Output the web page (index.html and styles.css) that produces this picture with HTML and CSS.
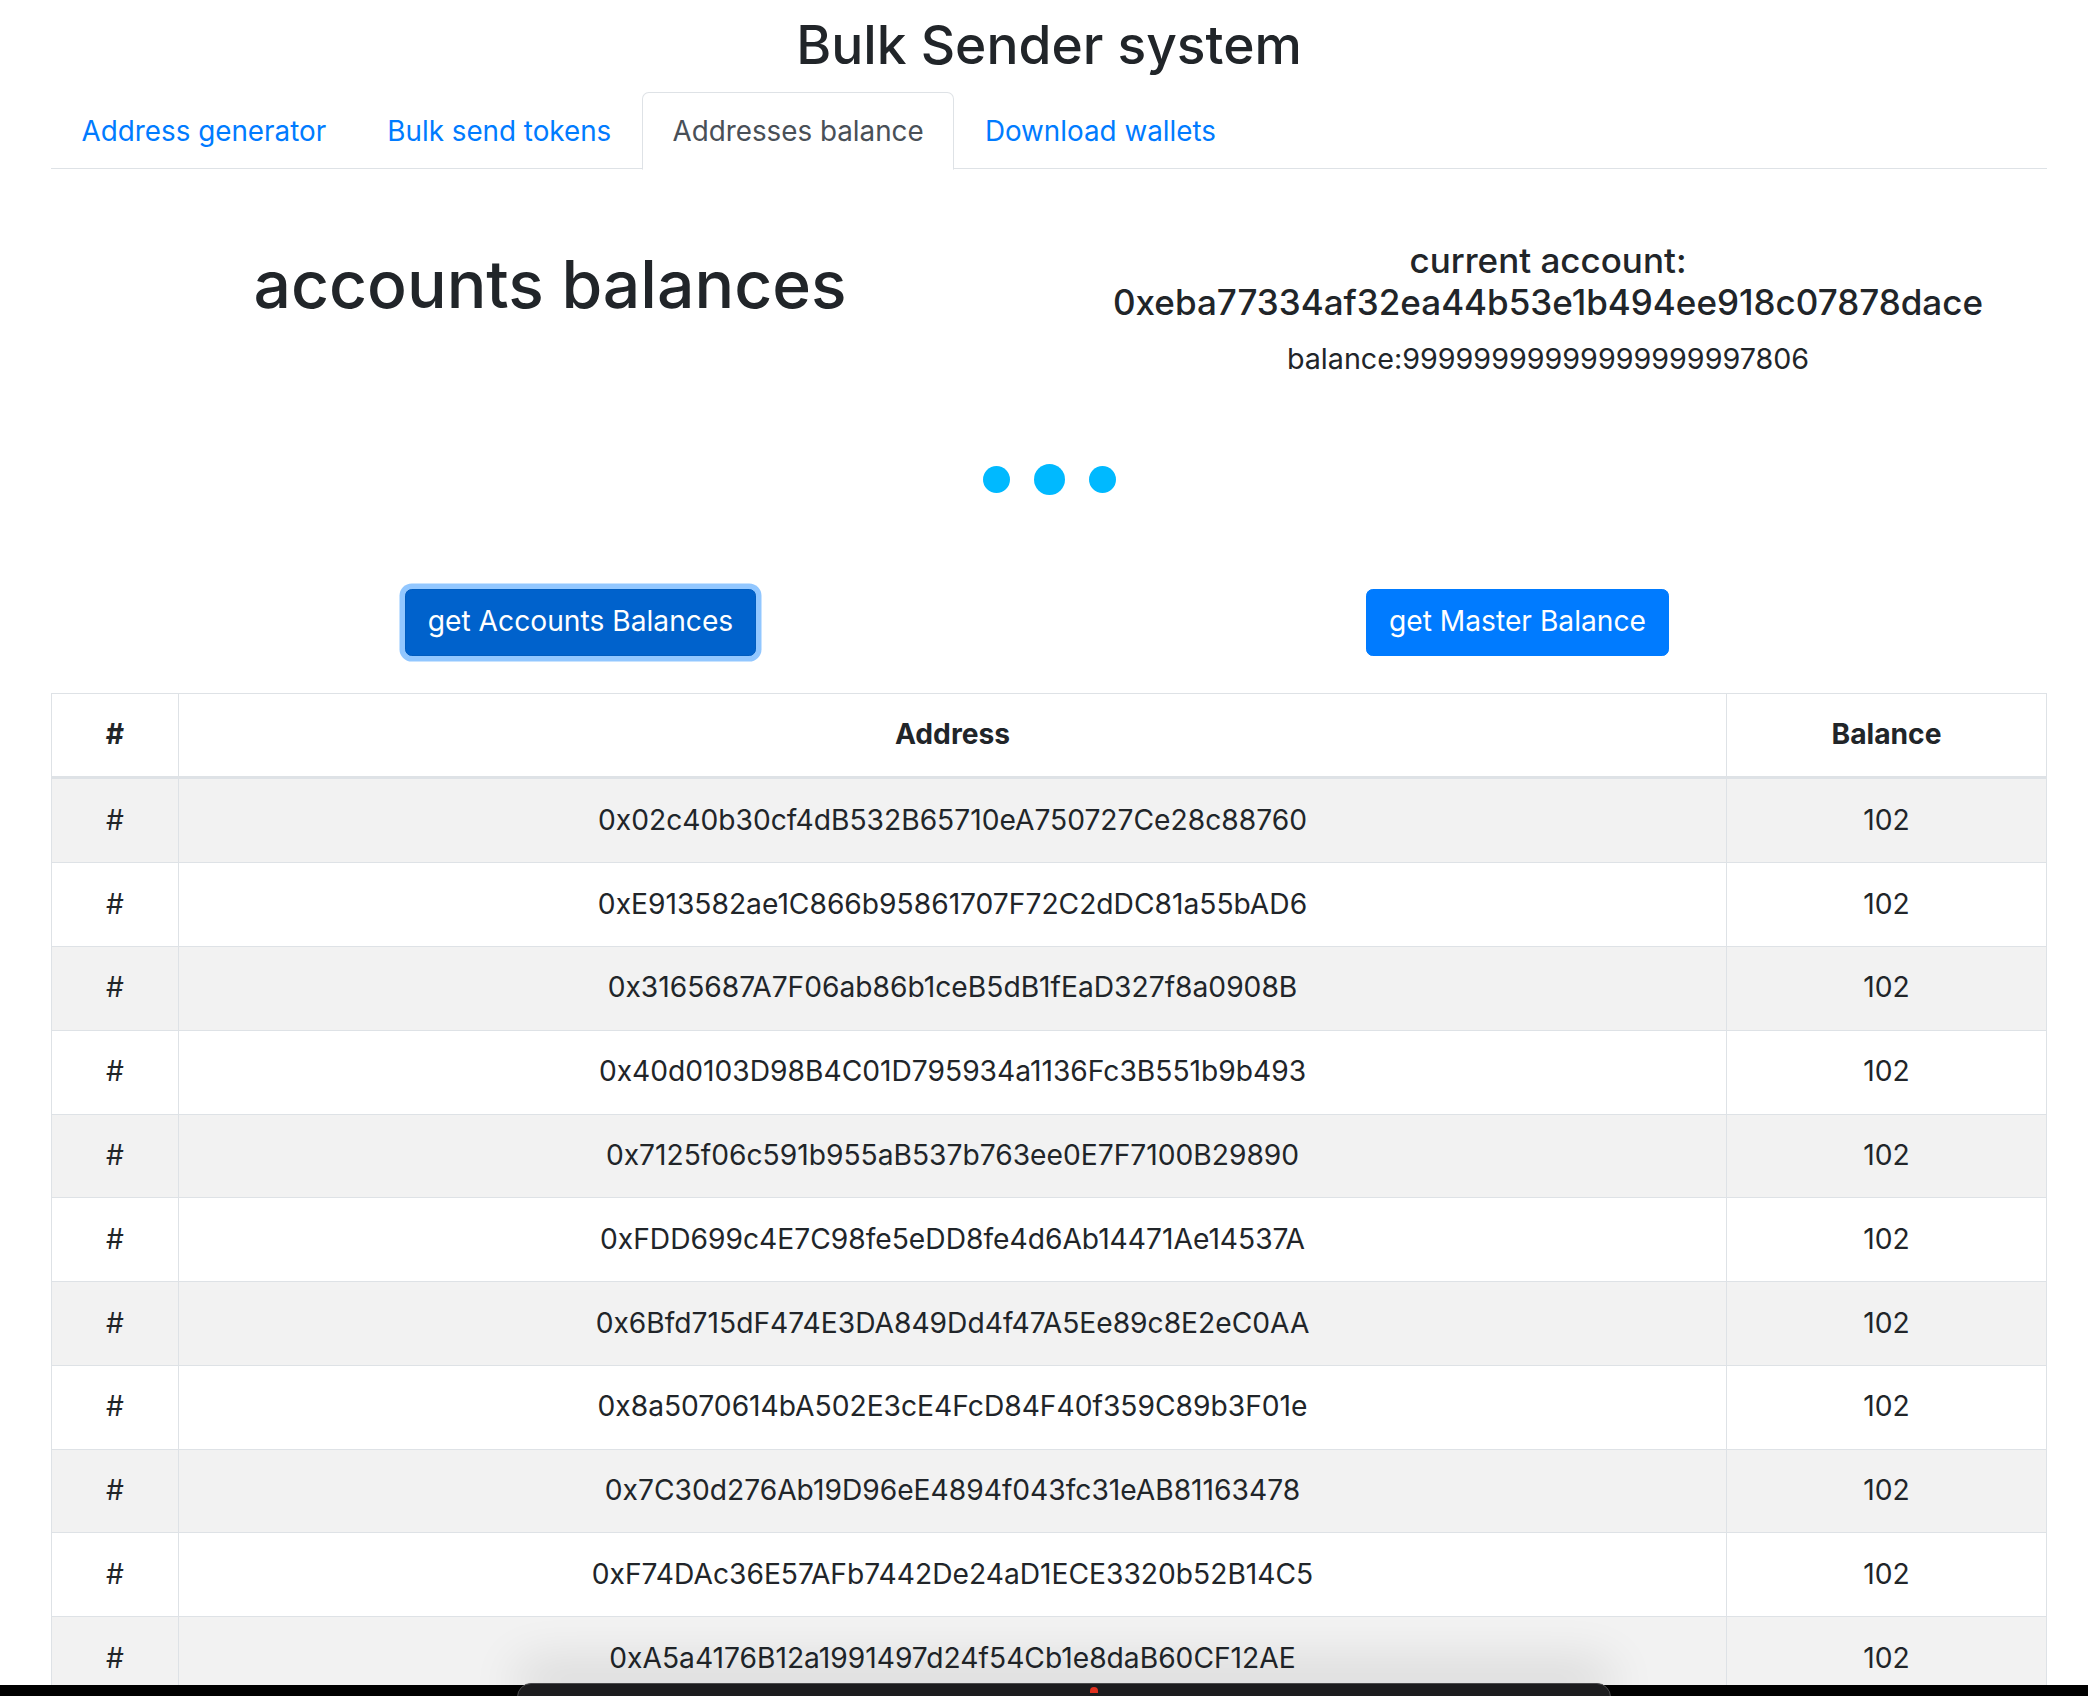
FILE: index.html
```html
<!DOCTYPE html>
<html lang="en">
<head>
<meta charset="utf-8">
<title>Bulk Sender system</title>
<link rel="stylesheet" href="styles.css">
</head>
<body>
<div class="page">
  <h2 class="title">Bulk Sender system</h2>
  <nav class="tabs">
    <a class="tab" href="#">Address generator</a>
    <a class="tab" href="#">Bulk send tokens</a>
    <a class="tab active" href="#">Addresses balance</a>
    <a class="tab" href="#">Download wallets</a>
  </nav>

  <section class="info">
    <div class="info-left">
      <h1 class="heading">accounts balances</h1>
    </div>
    <div class="info-right">
      <h5 class="account">current account:<br>0xeba77334af32ea44b53e1b494ee918c07878dace</h5>
      <p class="balance">balance:99999999999999999997806</p>
    </div>
  </section>

  <div class="loader">
    <span class="dot"></span>
    <span class="dot dot-big"></span>
    <span class="dot"></span>
  </div>

  <div class="actions">
    <div class="action"><button class="btn btn-focus">get Accounts Balances</button></div>
    <div class="action"><button class="btn">get Master Balance</button></div>
  </div>

  <table class="table">
    <thead>
      <tr><th class="c-num">#</th><th class="c-addr">Address</th><th class="c-bal">Balance</th></tr>
    </thead>
    <tbody>
      <tr><td>#</td><td>0x02c40b30cf4dB532B65710eA750727Ce28c88760</td><td>102</td></tr>
      <tr><td>#</td><td>0xE913582ae1C866b95861707F72C2dDC81a55bAD6</td><td>102</td></tr>
      <tr><td>#</td><td>0x3165687A7F06ab86b1ceB5dB1fEaD327f8a0908B</td><td>102</td></tr>
      <tr><td>#</td><td>0x40d0103D98B4C01D795934a1136Fc3B551b9b493</td><td>102</td></tr>
      <tr><td>#</td><td>0x7125f06c591b955aB537b763ee0E7F7100B29890</td><td>102</td></tr>
      <tr><td>#</td><td>0xFDD699c4E7C98fe5eDD8fe4d6Ab14471Ae14537A</td><td>102</td></tr>
      <tr><td>#</td><td>0x6Bfd715dF474E3DA849Dd4f47A5Ee89c8E2eC0AA</td><td>102</td></tr>
      <tr><td>#</td><td>0x8a5070614bA502E3cE4FcD84F40f359C89b3F01e</td><td>102</td></tr>
      <tr><td>#</td><td>0x7C30d276Ab19D96eE4894f043fc31eAB81163478</td><td>102</td></tr>
      <tr><td>#</td><td>0xF74DAc36E57AFb7442De24aD1ECE3320b52B14C5</td><td>102</td></tr>
      <tr><td>#</td><td>0xA5a4176B12a1991497d24f54Cb1e8daB60CF12AE</td><td>102</td></tr>
    </tbody>
  </table>
</div>

<div class="dock">
  <div class="dock-panel"><span class="dock-dot"></span></div>
</div>
</body>
</html>
```

FILE: styles.css
```css
* { box-sizing: border-box; }

html, body {
  margin: 0;
  padding: 0;
  background: #fff;
  overflow: hidden;
}

body {
  font-family: Inter, "Noto Sans", "Liberation Sans", sans-serif;
  font-size: 28.2px;
  line-height: 41.8px;
  color: #212529;
}

.page {
  padding: 13px 41px 0 51px;
}

.title {
  margin: 0 0 15.2px;
  text-align: center;
  font-size: 53.3px;
  font-weight: 500;
  line-height: 1.2;
}

.tabs {
  display: flex;
  border-bottom: 1.7px solid #dee2e6;
}

.tab {
  display: block;
  margin-bottom: -1.7px;
  padding: 17.7px 29.6px 16.7px;
  border: 1.7px solid transparent;
  border-top-left-radius: 6.8px;
  border-top-right-radius: 6.8px;
  color: #007bff;
  font-size: 27.8px;
  line-height: 41.5px;
  text-decoration: none;
}

.tab.active {
  color: #495057;
  background: #fff;
  border-color: #dee2e6 #dee2e6 #fff;
}

.info {
  display: grid;
  grid-template-columns: 1fr 1fr;
  margin-top: 70px;
}

.info-left {
  text-align: center;
  padding-top: 6px;
}

.heading {
  margin: 0;
  font-size: 66px;
  font-weight: 500;
  line-height: 1.2;
}

.info-right {
  text-align: center;
}

.account {
  margin: 0 0 15px;
  font-size: 35px;
  font-weight: 500;
  line-height: 42px;
}

.balance {
  margin: 0;
  font-size: 28.7px;
  line-height: 41.5px;
}

.loader {
  display: flex;
  justify-content: center;
  align-items: center;
  gap: 24px;
  height: 60px;
  margin-top: 70px;
}

.dot {
  display: block;
  width: 27px;
  height: 27px;
  border-radius: 50%;
  background: #00b9ff;
}

.dot-big {
  width: 31px;
  height: 31px;
}

.actions {
  display: grid;
  grid-template-columns: 1fr 1fr;
  padding: 0 61px;
  margin-top: 79px;
}

.action {
  display: flex;
  justify-content: center;
}

.btn {
  font-family: inherit;
  font-size: 28.2px;
  line-height: 41.5px;
  padding: 11.6px 22px;
  color: #fff;
  background: #007bff;
  border: 1.7px solid #007bff;
  border-radius: 6.8px;
  cursor: pointer;
}

.btn-focus {
  background: #0062cc;
  border-color: #005cbf;
  box-shadow: 0 0 0 5.5px rgba(38, 143, 255, 0.5);
}

.table {
  width: 100%;
  margin-top: 37px;
  border-collapse: collapse;
  table-layout: fixed;
  border: 1.7px solid #dee2e6;
}

.table th,
.table td {
  padding: 20.5px;
  text-align: center;
  border: 1.7px solid #dee2e6;
  vertical-align: top;
}

.table th {
  font-weight: 700;
  border-bottom-width: 3.4px;
}

.c-num { width: 127px; }
.c-bal { width: 320px; }

.table tbody tr:nth-child(odd) {
  background: rgba(0, 0, 0, 0.05);
}

.dock {
  position: fixed;
  left: 0;
  right: 0;
  bottom: 0;
  height: 11px;
  background: #000;
}

.dock-panel {
  position: absolute;
  left: 517px;
  width: 1094px;
  top: -2px;
  height: 30px;
  background: #1c1c1e;
  border: 1.5px solid #4a4a4c;
  border-radius: 14px 14px 0 0;
  box-shadow: 0 -18px 50px rgba(0, 0, 0, 0.14);
}

.dock-dot {
  position: absolute;
  left: 572px;
  top: 3px;
  width: 8px;
  height: 6px;
  border-radius: 4px 4px 0 0;
  background: #e0301e;
}
```
